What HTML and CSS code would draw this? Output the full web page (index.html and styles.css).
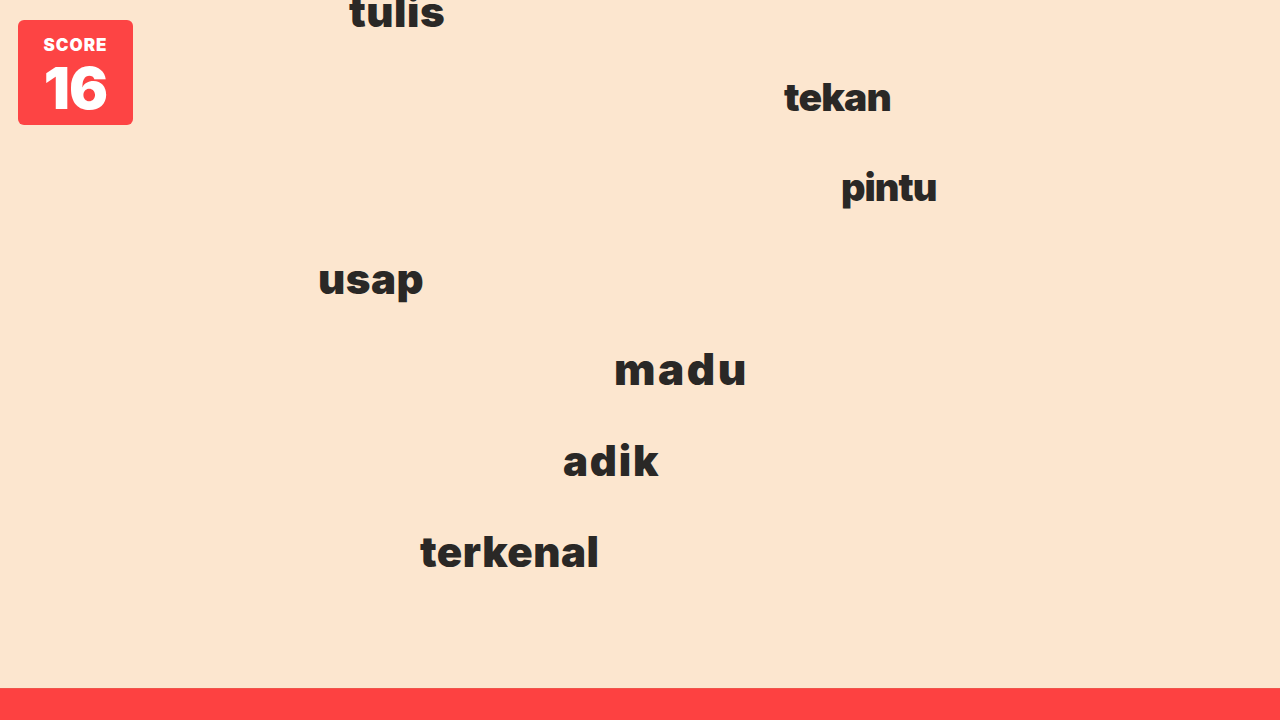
FILE: index.html
```html
<!DOCTYPE html>
<html lang="id">
<head>
<meta charset="utf-8">
<title>Word Game</title>
<link rel="stylesheet" href="styles.css">
</head>
<body>
<main class="game">
  <div class="stage">
    <div class="score">
      <span class="score-label">SCORE</span>
      <span class="score-value">16</span>
    </div>
    <span class="word" style="left:349px;top:-9px">tulis</span>
    <span class="word word--small" style="left:784px;top:77px">tekan</span>
    <span class="word word--smaller" style="left:841px;top:168px">pintu</span>
    <span class="word" style="left:318px;top:258px">usap</span>
    <span class="word word--large" style="left:614px;top:347px">madu</span>
    <span class="word word--wide" style="left:563px;top:440px">adik</span>
    <span class="word" style="left:420px;top:531px">terkenal</span>
  </div>
  <div class="ground"></div>
</main>
</body>
</html>
```
FILE: styles.css
```css
html, body {
  margin: 0;
  padding: 0;
  height: 100%;
}
body {
  background: #fce6cf;
  font-family: "Inter", "Noto Sans", sans-serif;
  overflow: hidden;
}
.game {
  display: flex;
  flex-direction: column;
  height: 720px;
}
.stage {
  position: relative;
  flex: 1;
  padding: 20px 0 0 18px;
}
.score {
  width: 115px;
  height: 105px;
  box-sizing: border-box;
  background: #fd4444;
  border-radius: 6px;
  display: flex;
  flex-direction: column;
  align-items: center;
  padding-top: 17px;
  color: #ffffff;
}
.score-label {
  font-size: 17px;
  font-weight: 900;
  letter-spacing: 1px;
  line-height: 17px;
}
.score-value {
  font-size: 58px;
  font-weight: 900;
  line-height: 52px;
  letter-spacing: -1px;
  margin-top: 8px;
}
.word {
  position: absolute;
  font-size: 42px;
  line-height: 1;
  font-weight: 900;
  letter-spacing: 0.5px;
  color: #2a2826;
  white-space: nowrap;
}
.word--small {
  font-size: 39px;
  letter-spacing: -0.8px;
}
.word--smaller {
  font-size: 38px;
  letter-spacing: -1px;
}
.word--large {
  font-size: 44px;
  letter-spacing: 2.5px;
}
.word--wide {
  letter-spacing: 1.8px;
}
.ground {
  height: 32px;
  background: #fd4141;
  border-top: 1px solid #f0544a;
  box-sizing: border-box;
}
```
